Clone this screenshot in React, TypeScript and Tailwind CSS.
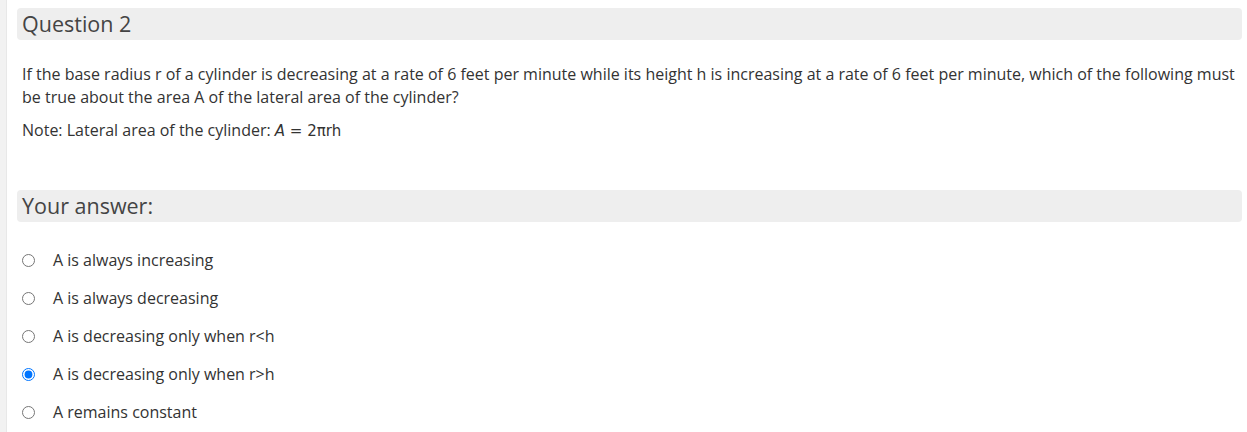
import React from "react";

const options = [
  "A is always increasing",
  "A is always decreasing",
  "A is decreasing only when r<h",
  "A is decreasing only when r>h",
  "A remains constant",
];

export default function App() {
  return (
    <div className="flex min-h-[432px] bg-white" style={{ fontFamily: '"Open Sans", sans-serif' }}>
      <div className="w-[7px] shrink-0 bg-[#f2f2f2] border-r border-[#e8e8e8]" />
      <div className="flex-1 pl-[10px] pr-[5px] text-[#333333]">
        <div className="mt-[8px] h-[32px] rounded-[4px] bg-[#eeeeee] px-[5px] flex items-center text-[21.5px] text-[#444]">
          Question 2
        </div>
        <div className="mt-[23px] px-[5px] text-[16px] leading-[23px]">
          <p>
            If the base radius r of a cylinder is decreasing at a rate of 6 feet per minute while its height h is increasing at a rate of 6 feet per minute, which of the following must be true about the area A of the lateral area of the cylinder?
          </p>
          <p className="mt-[10px]">
            Note: Lateral area of the cylinder:{" "}
            <span style={{ fontFamily: '"DejaVu Sans", sans-serif' }} className="text-[15px]">
              <i>A</i> = 2πrh
            </span>
          </p>
        </div>
        <div className="mt-[47px] h-[32px] rounded-[4px] bg-[#eeeeee] px-[5px] flex items-center text-[21.5px] text-[#444]">
          Your answer:
        </div>
        <div className="mt-[19px] flex flex-col">
          {options.map((o, i) => (
            <label key={i} className="flex items-center h-[38px] text-[16px]">
              <input
                type="radio"
                name="ans"
                defaultChecked={i === 3}
                className="ml-[5px] mr-[18px] w-[13px] h-[13px]"
              />
              <span>{o}</span>
            </label>
          ))}
        </div>
      </div>
    </div>
  );
}
